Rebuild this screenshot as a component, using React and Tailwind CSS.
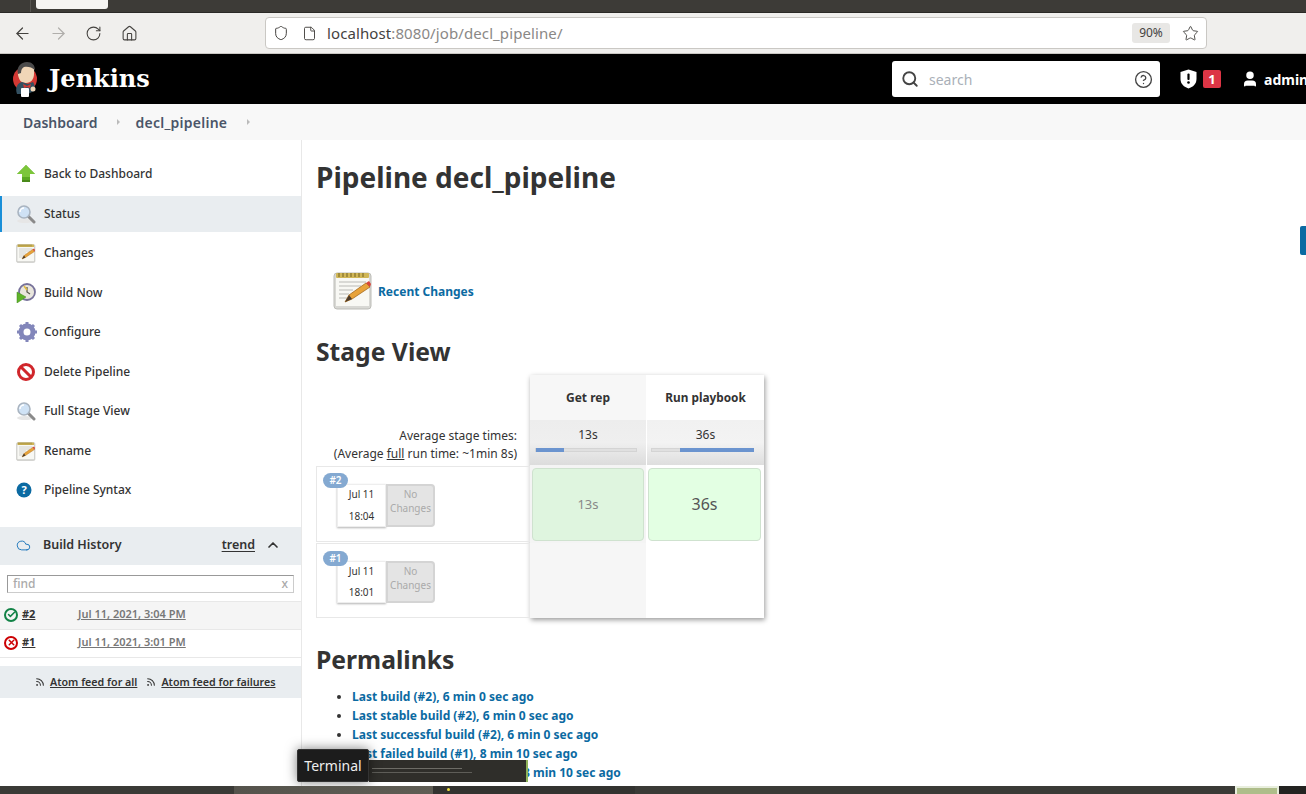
import React from "react";
import { ArrowLeft, ArrowRight, RotateCw, Home, Shield, File, Star, Search, CircleHelp, User, ChevronUp, Cloud, Rss, Check, X } from "lucide-react";

const font = { fontFamily: '"Noto Sans", sans-serif' };

// Jenkins butler head
const JenkinsLogo = () => (
  <svg width="28" height="36" viewBox="0 0 28 36">
    <circle cx="13" cy="18" r="12" fill="#d33833" />
    <path d="M6 14c-1-8 4-12 9-12s8 4 7 11c0 5-3 9-8 9s-7-3-8-8z" fill="#f0d6b7" />
    <path d="M6 13C4 6 9 1 15 1c5 0 8 3 8 8-3-3-8-4-11-3-2 1-3 3-3 6z" fill="#4a4a4a" />
    <path d="M5 33c-2-6 0-11 5-12l6 2 5-2c2 3 2 6 1 9l-6 3z" fill="#335061" />
    <path d="M11 23l4 2 4-2-1 4-3-1-3 1z" fill="#d33833" />
    <rect x="9" y="27" width="8" height="9" rx="1" fill="#fff" />
    <circle cx="21" cy="28" r="2.5" fill="#f0d6b7" />
  </svg>
);

const AlertShield = () => (
  <svg width="17" height="20" viewBox="0 0 17 20">
    <path d="M8.5 0.5L16.5 3v7c0 5-3.5 8-8 9.500C4 18 0.500 15 0.500 10V3z" fill="#fff" />
    <rect x="7.400" y="4.500" width="2.200" height="6.500" rx="1" fill="#000" />
    <circle cx="8.500" cy="13.500" r="1.300" fill="#000" />
  </svg>
);

const ArrowIcon = () => (
  <svg width="20" height="20" viewBox="0 0 20 20">
    <path d="M10 1l9 9h-5v8H6v-8H1z" fill="#5aa821" />
    <path d="M10 1l9 9h-5v3H6v-3H1z" fill="#7cc63a" />
    <rect x="6" y="16" width="8" height="2" fill="#4a8a1a" />
  </svg>
);

const MagnifierIcon = () => (
  <svg width="20" height="20" viewBox="0 0 20 20">
    <ellipse cx="9" cy="17" rx="8" ry="2" fill="#e6e6e6" />
    <path d="M12 12l6 6" stroke="#8a8a8a" strokeWidth="3" strokeLinecap="round" />
    <circle cx="8" cy="8" r="6" fill="#cfe2f5" stroke="#a9b4c0" strokeWidth="1.6" />
    <path d="M4 8a4 4 0 0 1 4-4" stroke="#fff" strokeWidth="1.5" fill="none" />
  </svg>
);

const NotepadIcon = ({ size = 20 }) => (
  <svg width={size} height={size} viewBox="0 0 40 40">
    <rect x="1" y="3" width="37" height="36" rx="3" fill="#d8d8d4" stroke="#bdbdb8" />
    <rect x="3" y="7" width="33" height="29" fill="#f8f8f4" />
    <rect x="3" y="3" width="33" height="5" rx="1" fill="#d0b656" />
    <path d="M6 3v4M10 3v4M14 3v4M18 3v4M22 3v4M26 3v4M30 3v4" stroke="#8d7a33" strokeWidth="1.4" />
    <path d="M6 12h27M6 16h22M6 20h14M6 24h10M6 28h8" stroke="#b9b9b5" strokeWidth="1.2" />
    <path d="M12 32l4-7L33 13l4 4-18 12z" fill="#e8a33a" stroke="#a56a1e" strokeWidth="0.8" />
    <path d="M33 13l4 4 1-3-2-3z" fill="#d8453a" />
    <path d="M12 32l4-7 3 4z" fill="#4b3a2a" />
  </svg>
);

const BuildIcon = () => (
  <svg width="20" height="20" viewBox="0 0 20 20">
    <circle cx="11" cy="9" r="8" fill="#e9e6dd" stroke="#77729a" strokeWidth="1.8" />
    <path d="M11 4v5l3 2" stroke="#5c5a50" strokeWidth="1.3" fill="none" />
    <path d="M8 3l3 4" stroke="#e0b93f" strokeWidth="1.5" />
    <path d="M1 9l9 5-9 6z" fill="#5fb32a" stroke="#3f8a1a" strokeWidth="0.5" />
  </svg>
);

const GearIcon = () => (
  <svg width="22" height="22" viewBox="0 0 22 22">
    <circle cx="11" cy="11" r="6" fill="none" stroke="#8286ba" strokeWidth="5" />
    <path d="M11 1v4M11 17v4M1 11h4M17 11h4M4 4l3 3M15 15l3 3M18 4l-3 3M7 15l-3 3" stroke="#8286ba" strokeWidth="3" />
    <circle cx="11" cy="11" r="3" fill="#fff" />
  </svg>
);

const NoIcon = () => (
  <svg width="20" height="20" viewBox="0 0 20 20">
    <circle cx="10" cy="10" r="7.5" fill="#fff" stroke="#d0262b" strokeWidth="3" />
    <path d="M5 5l10 10" stroke="#d0262b" strokeWidth="3" />
  </svg>
);

const HelpIcon = () => (
  <svg width="16" height="16" viewBox="0 0 16 16">
    <circle cx="8" cy="8" r="7.5" fill="#0b6aa2" />
    <text x="8" y="12" textAnchor="middle" fontSize="11" fontWeight="700" fill="#fff" fontFamily="Noto Sans, sans-serif">?</text>
  </svg>
);

const sideItems = [
  { label: "Back to Dashboard", icon: <ArrowIcon /> },
  { label: "Status", icon: <MagnifierIcon />, active: true },
  { label: "Changes", icon: <NotepadIcon /> },
  { label: "Build Now", icon: <BuildIcon /> },
  { label: "Configure", icon: <GearIcon /> },
  { label: "Delete Pipeline", icon: <NoIcon /> },
  { label: "Full Stage View", icon: <MagnifierIcon /> },
  { label: "Rename", icon: <NotepadIcon /> },
  { label: "Pipeline Syntax", icon: <HelpIcon /> },
];

const permalinks = [
  "Last build (#2), 6 min 0 sec ago",
  "Last stable build (#2), 6 min 0 sec ago",
  "Last successful build (#2), 6 min 0 sec ago",
  "Last failed build (#1), 8 min 10 sec ago",
  "Last unsuccessful build (#1), 8 min 10 sec ago",
  "Last completed build (#2), 6 min 0 sec ago",
];

const BuildRow = ({ num, time, className, pillClass, boxClass }) => (
  <div className={`relative border border-[#e8e8e8] ${className}`}>
    <span className={`absolute left-[6px] z-10 w-[25px] h-[15px] rounded-full bg-[#84a9d1] text-white text-[10px] font-semibold leading-[15px] text-center ${pillClass}`}>#{num}</span>
    <div className={`absolute left-[20px] flex ${boxClass}`}>
      <div className="w-[49px] h-full bg-white border border-[#eee] shadow-[0_1px_2px_rgba(0,0,0,0.3)] flex flex-col items-center justify-between py-[2px] text-[10px] leading-[15px] text-[#333]">
        <span>Jul 11</span>
        <span>{time}</span>
      </div>
      <div className="w-[49px] h-full bg-[#e4e4e4] border-2 border-[#d4d4d4] rounded-r-[4px] text-center text-[10px] leading-[14px] text-[#aaa] pt-[1px]">
        No<br />Changes
      </div>
    </div>
  </div>
);

const Bar = ({ from, to, className }) => (
  <div className={`relative mt-[4px] w-[102px] h-[4px] bg-[#e0e0e0] border border-[#d4d4d4] ${className}`}>
    <div className="absolute -top-px -bottom-px bg-[#6b94cf]" style={{ left: from, width: to - from }} />
  </div>
);

export default function App() {
  return (
    <div className="relative w-[1306px] h-[794px] overflow-hidden bg-white text-[#333]" style={font}>
      {/* browser tab strip */}
      <div className="h-[13px] bg-[#3d3b37] border-b border-[#2a2926] flex items-start">
        <div className="ml-[30px] w-px h-[12px] bg-[#55534f]" />
        <div className="ml-[5px] w-[72px] h-[9px] bg-[#f5f4f2] rounded-b-[3px]" />
      </div>

      {/* browser toolbar */}
      <div className="h-[41px] bg-[#f0efed] border-b border-[#c9c7c3] flex items-center text-[#44423f]">
        <div className="w-[265px] flex items-center pl-[13px] gap-[17px]">
          <ArrowLeft size={19} strokeWidth={1.5} />
          <ArrowRight size={19} strokeWidth={1.5} className="text-[#b0aeab]" />
          <RotateCw size={17} strokeWidth={1.5} />
          <Home size={17} strokeWidth={1.5} className="ml-[2px]" />
        </div>
        <div className="w-[942px] h-[32px] bg-white border border-[#cac8c4] rounded-[4px] flex items-center pl-[7px] pr-[6px]">
          <Shield size={16} strokeWidth={1.5} />
          <File size={15} strokeWidth={1.5} className="ml-[13px]" />
          <span className="ml-[10px] text-[15px] tracking-[0.1px]">
            localhost<span className="text-[#8a8886]">:8080/job/decl_pipeline/</span>
          </span>
          <span className="ml-auto w-[38px] h-[20px] bg-[#e8e7e5] rounded-[3px] text-[12px] leading-[20px] text-center">90%</span>
          <Star size={17} strokeWidth={1.3} className="ml-[12px] mr-[1px]" />
        </div>
      </div>

      {/* jenkins header */}
      <header className="h-[50px] bg-black flex items-center pl-[12px] text-white">
        <JenkinsLogo />
        <span className="ml-[9px] text-[24px] font-bold" style={{ fontFamily: '"DejaVu Serif", serif' }}>Jenkins</span>
        <div className="ml-auto w-[268px] h-[36px] bg-white rounded-[3px] flex items-center pl-[9px] pr-[7px] text-[#444]">
          <Search size={18} strokeWidth={2.5} />
          <span className="ml-[10px] text-[14px] text-[#aab0b8]">search</span>
          <CircleHelp size={19} strokeWidth={1.7} className="ml-auto" />
        </div>
        <span className="ml-[20px] flex"><AlertShield /></span>
        <span className="ml-[6px] w-[18px] h-[18px] rounded-[2px] bg-[#dc3545] text-[13px] font-bold leading-[18px] text-center">1</span>
        <User size={18} fill="#fff" className="ml-[20px]" />
        <span className="ml-[5px] w-[42px] text-[14px] font-bold overflow-hidden">admin</span>
      </header>

      {/* breadcrumbs */}
      <nav className="h-[36px] bg-[#f8f8f8] flex items-center pl-[23px] text-[14px] font-semibold text-[#4a5568]">
        <span>Dashboard</span>
        <span className="ml-[20px] w-0 h-0 border-y-[3px] border-y-transparent border-l-[3px] border-l-[#bbb]" />
        <span className="ml-[15px] tracking-[0.25px]">decl_pipeline</span>
        <span className="ml-[20px] w-0 h-0 border-y-[3px] border-y-transparent border-l-[3px] border-l-[#bbb]" />
      </nav>

      <div className="flex h-[654px]">
        {/* side panel */}
        <aside className="w-[302px] shrink-0 border-r border-[#e8e8e8] pt-[16px] text-[12px] font-medium text-[#333]">
          <div className="flex flex-col gap-[3.5px]">
            {sideItems.map((item) => (
              <div
                key={item.label}
                className={`h-[36px] flex items-center border-l-2 ${item.active ? "border-[#1a8fd8] bg-[#e9edf0]" : "border-transparent"}`}
              >
                <span className="w-[42px] pl-[14px] flex items-center">{item.icon}</span>
                <span>{item.label}</span>
              </div>
            ))}
          </div>

          <div className="mt-[19px] h-[38px] bg-[#e9edf0] flex items-center pl-[16px] pr-[20px] pb-[2px] text-[12.5px]">
            <Cloud size={15} strokeWidth={1.5} className="text-[#1b75bb]" />
            <span className="ml-[12px] font-semibold">Build History</span>
            <span className="ml-auto font-semibold underline underline-offset-2">trend</span>
            <ChevronUp size={16} strokeWidth={2.5} className="ml-[10px]" />
          </div>

          <div className="mt-[10px] mx-[7px] h-[18px] border border-[#ccc] border-t-[#999] border-l-[#999] flex items-center justify-between px-[5px] text-[12px] text-[#aaa]">
            <span>find</span>
            <span>x</span>
          </div>

          <div className="mt-[8px] h-[29px] bg-[#f5f5f5] border-y border-[#e8e8e8] flex items-center pl-[4px] pb-[2px] text-[11px]">
            <span className="w-[14px] h-[14px] rounded-full border-2 border-[#138347] flex items-center justify-center">
              <Check size={9} strokeWidth={4} className="text-[#138347]" />
            </span>
            <span className="ml-[4px] w-[56px] font-bold underline">#2</span>
            <span className="text-[#777] font-semibold underline">Jul 11, 2021, 3:04 PM</span>
          </div>
          <div className="h-[28px] border-b border-[#e8e8e8] flex items-center pl-[4px] pb-[2px] text-[11px]">
            <span className="w-[14px] h-[14px] rounded-full border-2 border-[#cc0003] flex items-center justify-center">
              <X size={9} strokeWidth={4} className="text-[#cc0003]" />
            </span>
            <span className="ml-[4px] w-[56px] font-bold underline">#1</span>
            <span className="text-[#777] font-semibold underline">Jul 11, 2021, 3:01 PM</span>
          </div>

          <div className="mt-[8px] h-[32px] bg-[#e9edf0] flex items-center pl-[35px] text-[10.7px] font-semibold">
            <Rss size={10} strokeWidth={2.5} />
            <span className="ml-[5px] underline">Atom feed for all</span>
            <Rss size={10} strokeWidth={2.5} className="ml-[9px]" />
            <span className="ml-[5px] underline">Atom feed for failures</span>
          </div>
        </aside>

        {/* main panel */}
        <main className="flex-1 pl-[14px] min-w-0">
          <h1 className="mt-[17px] h-[40px] text-[28px] leading-[40px] font-bold text-[#333]">Pipeline decl_pipeline</h1>

          <div className="mt-[73px] ml-[17px] h-[40px] flex items-center">
            <NotepadIcon size={40} />
            <span className="ml-[5px] pt-[4px] text-[12px] font-bold text-[#0b6aa2]">Recent Changes</span>
          </div>

          <h2 className="mt-[22px] h-[40px] text-[24.7px] leading-[40px] font-bold text-[#333]">Stage View</h2>

          {/* stage view table */}
          <div className="mt-[3px] flex items-start">
            <div className="w-[214px] shrink-0 pt-[47px]">
              <div className="h-[44px] pr-[13px] text-right text-[12px] leading-[18px] pt-[5px]">
                <div>Average stage times:</div>
                <div>(Average <span className="underline">full</span> run time: ~1min 8s)</div>
              </div>
              <BuildRow num="2" time="18:04" className="h-[76px]" pillClass="top-[6px]" boxClass="top-[17px] h-[43px]" />
              <BuildRow num="1" time="18:01" className="h-[75px] mt-px" pillClass="top-[7px]" boxClass="top-[17px] h-[42px]" />
            </div>
            <div className="w-[234px] shadow-[1px_2px_5px_rgba(0,0,0,0.4)] grid grid-cols-[116px_117px] gap-x-px text-center">
              <div className="h-[45px] bg-[#f7f7f7] text-[12px] font-bold leading-[45px]">Get rep</div>
              <div className="h-[45px] bg-white text-[11.8px] font-bold leading-[45px]">Run playbook</div>
              <div className="h-[45px] bg-gradient-to-b from-[#ededed] via-[#efefef] to-[#dcdcdc] pt-[6px] text-[12px] leading-[18px]">
                13s
                <Bar from={0} to={28} className="ml-[5px]" />
              </div>
              <div className="h-[45px] bg-gradient-to-b from-[#f1f1f1] via-[#f3f3f3] to-[#dedede] pt-[6px] text-[12px] leading-[18px]">
                36s
                <Bar from={28} to={102} className="ml-[4px]" />
              </div>
              <div className="h-[78px] bg-[#f4f4f4] p-[2px]">
                <div className="h-[73px] mt-px bg-[#dff5df] border border-[#cfe2cf] rounded-[4px] text-[13px] text-[#888] leading-[71px]">13s</div>
              </div>
              <div className="h-[78px] bg-white py-[2px] pl-px pr-[3px]">
                <div className="h-[73px] mt-px bg-[#e3ffe3] border border-[#cfe2cf] rounded-[4px] text-[16px] text-[#555] leading-[71px]">36s</div>
              </div>
              <div className="h-[75px] bg-[#f6f6f6]" />
              <div className="h-[75px] bg-white" />
            </div>
          </div>

          <h2 className="mt-[22px] h-[40px] text-[24.7px] leading-[40px] font-bold text-[#333]">Permalinks</h2>

          <ul className="mt-[7px] ml-[36px] list-disc text-[12px] leading-[19px] font-bold text-[#0b6aa2] marker:text-[#333]">
            {permalinks.map((p) => (
              <li key={p}>{p}</li>
            ))}
          </ul>
        </main>
      </div>

      {/* widget tab on the right edge */}
      <div className="absolute right-0 top-[226px] w-[6px] h-[29px] bg-[#0b6aa2] rounded-l-[2px]" />

      {/* terminal window preview and tooltip */}
      <div className="absolute left-[369px] top-[760px] w-[159px] h-[22px] bg-[#2f2e2a] border-r-2 border-[#8fb35a] flex flex-col gap-[3px] pt-[8px] pl-[3px]">
        <div className="w-[90px] h-px bg-[#6d6c66]" />
        <div className="w-[100px] h-px bg-[#5e5d58]" />
      </div>
      <div className="absolute left-[297px] top-[749px] w-[72px] h-[33px] bg-[#1c1c1c] border border-[#333] rounded-[2px] shadow-[0_0_12px_rgba(0,0,0,0.5)] text-[#eee] text-[14px] leading-[31px] text-center">
        Terminal
      </div>

      {/* desktop task bar */}
      <div className="absolute left-0 right-0 bottom-0 h-[8px] bg-[#3a3a36] flex overflow-hidden">
        <div className="w-[234px]" />
        <div className="w-[199px] bg-gradient-to-r from-[#55534c] to-[#5f5d54]" />
        <div className="w-[202px] bg-[#333330] pl-[14px]">
          <div className="mt-[2px] w-[3px] h-[3px] rounded-full bg-[#f2e23c]" />
        </div>
        <div className="w-[600px]" />
        <div className="w-[44px] bg-[#aebd8a] border-x-2 border-t-2 border-[#e8eedd]" />
        <div className="flex-1 bg-[#232321]" />
      </div>
    </div>
  );
}
